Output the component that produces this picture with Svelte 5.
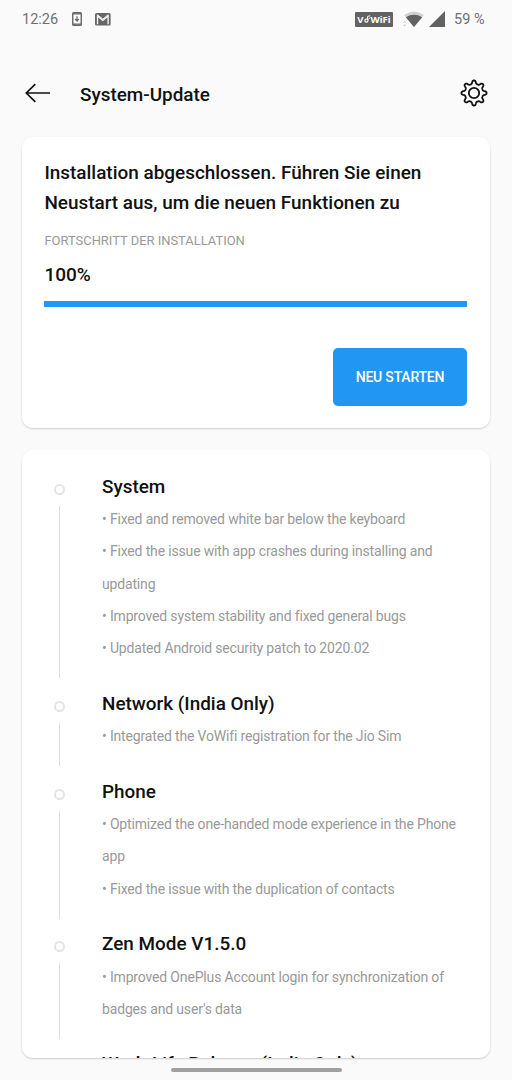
<script lang="ts">
	type Section = { title: string; lines: string[] };

	const progress = 100;

	const sections: Section[] = [
		{
			title: 'System',
			lines: [
				'Fixed and removed white bar below the keyboard',
				'Fixed the issue with app crashes during installing and updating',
				'Improved system stability and fixed general bugs',
				'Updated Android security patch to 2020.02'
			]
		},
		{
			title: 'Network (India Only)',
			lines: ['Integrated the VoWifi registration for the Jio Sim']
		},
		{
			title: 'Phone',
			lines: [
				'Optimized the one-handed mode experience in the Phone app',
				'Fixed the issue with the duplication of contacts'
			]
		},
		{
			title: 'Zen Mode V1.5.0',
			lines: ["Improved OnePlus Account login for synchronization of badges and user's data"]
		},
		{ title: 'Work-Life Balance (India Only)', lines: [] }
	];

	// gear outline with eight rounded teeth
	function gearPath(cx: number, cy: number, radius: number, depth: number) {
		const points: string[] = [];
		for (let i = 0; i < 144; i++) {
			const angle = (i / 144) * Math.PI * 2;
			const wave = Math.tanh(1.8 * (Math.cos(angle * 8) - 0.25));
			const r = radius + depth * wave;
			points.push(`${(cx + r * Math.sin(angle)).toFixed(2)} ${(cy - r * Math.cos(angle)).toFixed(2)}`);
		}
		return `M${points.join('L')}Z`;
	}
</script>

<div class="screen">
	<div class="status-bar">
		<span class="clock">12:26</span>
		<svg class="download" width="10" height="14" viewBox="0 0 10 14">
			<rect x="0.75" y="0.75" width="8.5" height="12.5" rx="0.8" fill="none" stroke="#666" stroke-width="1.4" />
			<path d="M1 1.2h8v1.4H1zM1 11.4h8v1.4H1z" fill="#666" />
			<path d="M5 4.2v4.2M3.2 7l1.8 2L6.8 7" fill="none" stroke="#666" stroke-width="1.2" />
		</svg>
		<svg class="mail" width="16" height="13" viewBox="0 0 16 13">
			<rect width="15.6" height="12.6" rx="1.5" fill="#666" />
			<path d="M2.5 11.2V3l5.3 4.5L13.1 3v8.2" fill="none" stroke="#fafafa" stroke-width="1.3" />
			<path d="M2.4 1.7l5.4 4.4 5.4-4.4" fill="none" stroke="#fafafa" stroke-width="1" />
		</svg>
		<div class="spacer"></div>
		<span class="vowifi">V<svg width="7" height="10" viewBox="0 0 7 10"><circle cx="2.4" cy="6.6" r="1.6" fill="none" stroke="#fff" stroke-width="1.2" /><path d="M3.6 5.5V2.4L6.2 1.8M4.3 5.3l2-1.8" fill="none" stroke="#fff" stroke-width="1" /></svg>WiFi</span>
		<svg class="wifi" width="22" height="17" viewBox="0 0 22 17">
			<path d="M1.2 4Q11-3 20.8 4L11 16z" fill="#d0d0d0" />
			<path d="M2.8 6.2Q11 1.5 19.2 6.2L11 16z" fill="#626262" />
			<path d="M0 11.5h3L1.5 9.8zM0 13.7h3l-1.5 1.7z" fill="#c4c4c4" />
		</svg>
		<svg class="signal" width="16" height="16" viewBox="0 0 16 16">
			<path d="M16 0v16H0z" fill="#626262" />
		</svg>
		<span class="battery">59 %</span>
	</div>

	<header>
		<button class="back" aria-label="Zurück">
			<svg width="26" height="20" viewBox="0 0 26 20">
				<path d="M25 10H1.3M10.3 1.2L1.3 10l9 8.8" fill="none" stroke="#111" stroke-width="1.7" />
			</svg>
		</button>
		<h1>System-Update</h1>
		<button class="settings" aria-label="Einstellungen">
			<svg width="28" height="28" viewBox="0 0 28 28">
				<path d={gearPath(14, 14, 11, 1.8)} fill="none" stroke="#111" stroke-width="1.8" stroke-linejoin="round" />
				<circle cx="14" cy="14" r="5.2" fill="none" stroke="#111" stroke-width="1.8" />
			</svg>
		</button>
	</header>

	<section class="card install">
		<h2>Installation abgeschlossen. Führen Sie einen<br />Neustart aus, um die neuen Funktionen zu</h2>
		<div class="label">FORTSCHRITT DER INSTALLATION</div>
		<div class="percent">{progress}%</div>
		<div class="track">
			<div class="bar" style="width: {progress}%"></div>
		</div>
		<button class="restart">NEU STARTEN</button>
	</section>

	<section class="card changelog">
		{#each sections as section}
			<article>
				<div class="rail">
					<span class="dot"></span>
					<span class="line"></span>
				</div>
				<div class="content">
					<h3>{section.title}</h3>
					{#each section.lines as line}
						<p>• {line}</p>
					{/each}
				</div>
			</article>
		{/each}
	</section>

	<div class="home-bar"></div>
</div>

<style>
	:global(body) {
		margin: 0;
		background: #fafafa;
	}

	.screen {
		display: flex;
		flex-direction: column;
		box-sizing: border-box;
		width: 512px;
		height: 1080px;
		overflow: hidden;
		background: #fafafa;
		color: #111;
		font-family: Roboto, sans-serif;
	}

	button {
		padding: 0;
		border: none;
		background: none;
		font-family: inherit;
		cursor: pointer;
	}

	h1,
	h2,
	h3,
	p {
		margin: 0;
	}

	svg {
		display: block;
		flex: none;
	}

	.status-bar {
		display: flex;
		align-items: center;
		height: 38px;
		padding: 0 28px 0 22px;
		color: #707070;
		font-size: 14.5px;
		white-space: nowrap;
	}

	.clock {
		width: 50px;
	}

	.download {
		margin-right: 13px;
	}

	.spacer {
		flex: 1;
	}

	.vowifi {
		display: flex;
		align-items: center;
		justify-content: center;
		width: 38px;
		height: 15px;
		border-radius: 1px;
		background: #626262;
		color: #fff;
		font-family: 'Noto Sans', sans-serif;
		font-size: 9.5px;
		font-weight: 700;
	}

	.wifi {
		margin-left: 10px;
	}

	.signal {
		margin-left: 4px;
	}

	.battery {
		width: 30px;
		margin-left: 9px;
	}

	header {
		display: flex;
		align-items: center;
		box-sizing: border-box;
		height: 99px;
		padding: 11px 24px 0 25px;
	}

	h1 {
		flex: 1;
		margin-left: 29px;
		padding-top: 2px;
		font-size: 18.9px;
		font-weight: 500;
	}

	.card {
		margin: 0 22px;
		box-sizing: border-box;
		border-radius: 11px;
		background: #fff;
		box-shadow: 0 1px 2px rgba(0, 0, 0, 0.18);
	}

	.install {
		display: flex;
		flex-direction: column;
		height: 291px;
		padding: 21px 23px 0 22.4px;
		flex: none;
	}

	h2 {
		font-size: 18.93px;
		font-weight: 500;
		line-height: 30px;
		white-space: nowrap;
	}

	.label {
		margin-top: 14px;
		color: #999;
		font-size: 12.95px;
		line-height: 18px;
	}

	.percent {
		margin-top: 13px;
		font-size: 19px;
		font-weight: 500;
		line-height: 24px;
	}

	.track {
		height: 6px;
		margin-top: 14px;
		background: #d3e9fc;
	}

	.bar {
		height: 100%;
		background: #2196f3;
	}

	.restart {
		align-self: flex-end;
		width: 134px;
		height: 58px;
		margin-top: 41px;
		border-radius: 5px;
		background: #2196f3;
		color: #fff;
		font-size: 14px;
		font-weight: 500;
		letter-spacing: -0.2px;
	}

	.changelog {
		height: 608px;
		margin-top: 22px;
		padding: 19.6px 30px 0 32px;
		overflow: hidden;
		flex: none;
	}

	article {
		display: flex;
	}

	.rail {
		display: flex;
		flex-direction: column;
		align-items: center;
		width: 11px;
		padding: 14px 0 8.5px;
	}

	.dot {
		flex: none;
		box-sizing: border-box;
		width: 11px;
		height: 11px;
		border: 2px solid #e4e4e4;
		border-radius: 50%;
	}

	.line {
		flex: 1;
		width: 1px;
		margin-top: 11px;
		background: #dedede;
	}

	.content {
		flex: 1;
		margin-left: 37px;
		padding-bottom: 22.1px;
	}

	h3 {
		height: 33.4px;
		font-size: 18.9px;
		font-weight: 500;
		line-height: 34px;
	}

	p {
		color: #999;
		font-size: 14px;
		letter-spacing: -0.16px;
		line-height: 32.35px;
	}

	.home-bar {
		align-self: center;
		width: 171px;
		height: 4px;
		margin-top: 10px;
		border-radius: 2px;
		background: #a0a0a0;
	}
</style>
